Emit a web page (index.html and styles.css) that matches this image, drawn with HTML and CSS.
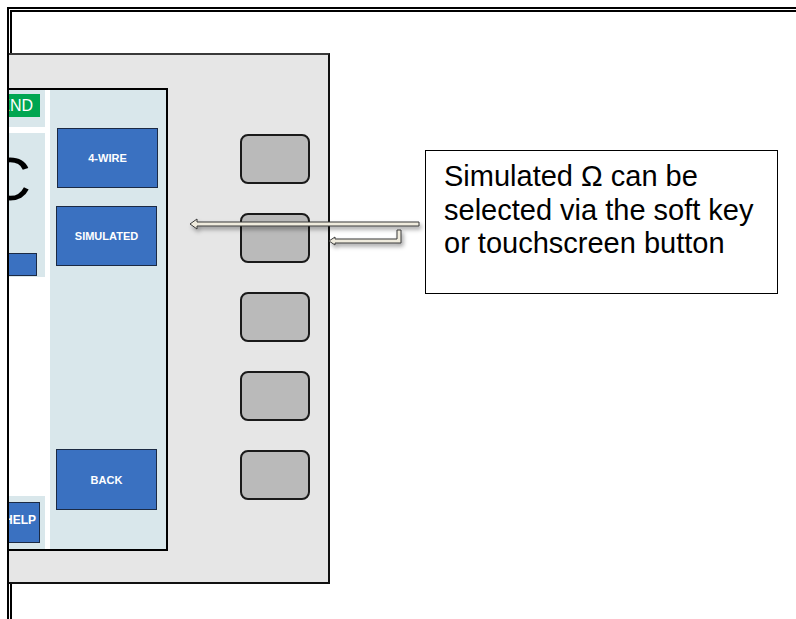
FILE: index.html
```html
<!DOCTYPE html>
<html lang="en">
<head>
    <meta charset="UTF-8">
    <meta name="viewport" content="width=device-width, initial-scale=1.0">
    <title>Simulated Ohms</title>
    <link rel="stylesheet" href="styles.css">
</head>
<body>
    <div class="page">
        <div class="panel">
            <div class="screen">
                <div class="left-col">
                    <div class="sec sec-top">
                        <div class="tag-green">END</div>
                    </div>
                    <div class="sec sec-mid">
                        <div class="big-unit">C</div>
                        <div class="bar-blue"></div>
                    </div>
                    <div class="sec sec-help">
                        <div class="help-btn">HELP</div>
                    </div>
                </div>
                <div class="right-col">
                    <div class="soft-btn first">4-WIRE</div>
                    <div class="soft-btn">SIMULATED</div>
                    <div class="soft-btn back">BACK</div>
                </div>
            </div>
            <div class="keys">
                <div class="key"></div>
                <div class="key"></div>
                <div class="key"></div>
                <div class="key"></div>
                <div class="key"></div>
            </div>
        </div>

        <div class="callout">
            Simulated Ω can be selected via the soft key or touchscreen button
        </div>
    </div>

    <svg class="arrows" width="796" height="619" viewBox="0 0 796 619">
        <defs>
            <filter id="shadow" x="-10%" y="-100%" width="120%" height="400%">
                <feDropShadow dx="2" dy="3" stdDeviation="2" flood-color="#000" flood-opacity="0.35"/>
            </filter>
        </defs>
        <polygon class="arrow" filter="url(#shadow)"
            points="190,224 197,219 197,222 419,222 419,226 197,226 197,229"/>
        <polygon class="arrow" filter="url(#shadow)"
            points="329,241 335,237 335,239 397,239 397,230 401,230 401,243 335,243 335,245"/>
    </svg>
</body>
</html>
```

FILE: styles.css
```css
* {
    box-sizing: border-box;
    margin: 0;
    padding: 0;
}

body {
    background-color: #fff;
    width: 796px;
    height: 619px;
    overflow: hidden;
    position: relative;
    font-family: "Liberation Sans", Arial, sans-serif;
}

.page {
    margin: 7px 0 0 7px;
    width: 900px;
    height: 700px;
    border-top: 5px double #000;
    border-left: 5px double #000;
    display: flex;
    align-items: flex-start;
}

/* device front panel */
.panel {
    margin-top: 41px;
    margin-left: -3px;
    width: 321px;
    height: 531px;
    background-color: #e6e6e6;
    border-top: 2px solid #3a3a3a;
    border-right: 2px solid #111;
    border-bottom: 2px solid #111;
    padding-top: 33px;
    display: flex;
    align-items: flex-start;
}

.screen {
    width: 159px;
    height: 463px;
    background-color: #fff;
    border-top: 2px solid #000;
    border-right: 2px solid #000;
    border-bottom: 2px solid #000;
    display: flex;
    gap: 5px;
}

.left-col {
    width: 36px;
    display: flex;
    flex-direction: column;
}

.sec {
    background-color: #d9e7eb;
    display: flex;
    flex-direction: column;
    align-items: flex-end;
    overflow: hidden;
}

.sec-top {
    height: 37px;
    padding-top: 4px;
    margin-bottom: 6px;
}

.tag-green {
    flex-shrink: 0;
    width: 60px;
    height: 23px;
    margin-right: 5px;
    background-color: #00a651;
    color: #fff;
    font-size: 16px;
    line-height: 23px;
    text-align: right;
    padding-right: 7px;
}

.sec-mid {
    height: 144px;
    padding-top: 15px;
}

.big-unit {
    font-size: 62px;
    line-height: 62px;
    color: #000;
    padding-right: 14px;
    white-space: nowrap;
}

.bar-blue {
    flex-shrink: 0;
    width: 50px;
    height: 23px;
    margin-top: auto;
    margin-right: 8px;
    margin-bottom: 1px;
    background-color: #3a71c1;
    border: 1px solid #1b2a44;
}

.sec-help {
    margin-top: auto;
    height: 53px;
    padding-top: 6px;
}

.help-btn {
    flex-shrink: 0;
    width: 50px;
    height: 41px;
    margin-right: 5px;
    background-color: #3a71c1;
    border: 1px solid #1b2a44;
    color: #fff;
    font-size: 12px;
    font-weight: bold;
    line-height: 35px;
    text-align: right;
    padding-right: 3px;
}

.right-col {
    flex: 1;
    background-color: #d9e7eb;
    padding: 38px 0 39px 6px;
    display: flex;
    flex-direction: column;
}

.soft-btn {
    width: 101px;
    height: 60px;
    background-color: #3a71c1;
    border: 1px solid #1b2a44;
    color: #fff;
    font-size: 11px;
    font-weight: bold;
    display: flex;
    align-items: center;
    justify-content: center;
}

.soft-btn.first {
    margin-left: 1px;
    margin-bottom: 18px;
}

.soft-btn.back {
    margin-top: auto;
    height: 61px;
}

/* hardware soft keys */
.keys {
    margin-left: 72px;
    margin-top: 46px;
    display: flex;
    flex-direction: column;
    gap: 29px;
}

.key {
    width: 70px;
    height: 50px;
    background-color: #bababa;
    border: 2px solid #1a1a1a;
    border-radius: 8px;
}

.callout {
    margin-top: 138px;
    margin-left: 95px;
    width: 353px;
    height: 144px;
    border: 1px solid #000;
    padding: 9px 12px 0 18px;
    font-size: 29px;
    line-height: 33.5px;
    color: #000;
}

.arrows {
    position: absolute;
    top: 0;
    left: 0;
    pointer-events: none;
}

.arrow {
    fill: #efebdd;
    stroke: #3a3a3a;
    stroke-width: 1;
}
```
